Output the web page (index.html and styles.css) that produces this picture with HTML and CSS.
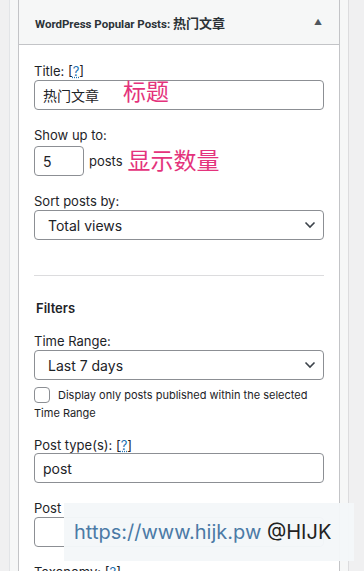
FILE: index.html
```html
<!DOCTYPE html>
<html lang="zh-CN">
<head>
    <meta charset="UTF-8">
    <meta name="viewport" content="width=device-width, initial-scale=1.0">
    <title>WordPress Popular Posts</title>
    <link rel="stylesheet" href="styles.css">
</head>
<body>
    <div class="sidebar">
        <div class="widget">
            <div class="widget-top">
                <span class="widget-title">WordPress Popular Posts: <span class="cjk">热门文章</span></span>
                <span class="toggle">&#9650;</span>
            </div>
            <div class="widget-inside">
                <div class="field">
                    <label class="label">Title: [<a class="help">?</a>]</label>
                    <div class="input">
                        <span>热门文章</span>
                        <span class="note note-title">标题</span>
                    </div>
                </div>

                <div class="field">
                    <label class="label">Show up to:</label>
                    <div class="row">
                        <div class="input input-small">5</div>
                        <span class="unit">posts</span>
                        <span class="note">显示数量</span>
                    </div>
                </div>

                <div class="field">
                    <label class="label">Sort posts by:</label>
                    <div class="select">
                        <span>Total views</span>
                        <svg width="12" height="8" viewBox="0 0 12 8"><path d="M1.5 1.5 L6 6 L10.5 1.5" fill="none" stroke="#3c434a" stroke-width="1.6"/></svg>
                    </div>
                </div>

                <hr class="divider">

                <h4 class="section">Filters</h4>

                <div class="field field-tight">
                    <label class="label">Time Range:</label>
                    <div class="select">
                        <span>Last 7 days</span>
                        <svg width="12" height="8" viewBox="0 0 12 8"><path d="M1.5 1.5 L6 6 L10.5 1.5" fill="none" stroke="#3c434a" stroke-width="1.6"/></svg>
                    </div>
                    <p class="check-line"><span class="checkbox"></span>Display only posts published within the selected Time Range</p>
                </div>

                <div class="field">
                    <label class="label label-near">Post type(s): [<a class="help">?</a>]</label>
                    <div class="input">post</div>
                </div>

                <div class="field">
                    <label class="label">Post</label>
                    <div class="input"></div>
                </div>

                <div class="field">
                    <label class="label">Taxonomy: [<a class="help">?</a>]</label>
                </div>
            </div>
        </div>
        <div class="watermark"><span class="url">https://www.hijk.pw</span> @HIJK</div>
    </div>
</body>
</html>
```

FILE: styles.css
```css
body, html {
    margin: 0;
    height: 100%;
    overflow: hidden;
    background-color: #f0f0f1;
}
body {
    font-family: Inter, "Noto Sans CJK SC", sans-serif;
    font-size: 13px;
    color: #1d2327;
}
.sidebar {
    position: relative;
    margin-left: 9px;
    width: 322px;
    height: 100%;
    padding: 0 8px;
    background-color: #f6f7f7;
    border-left: 1px solid #e2e4e7;
    border-right: 1px solid #dcdcde;
}
.widget {
    background-color: #fff;
    border: 1px solid #c3c4c7;
    border-top: none;
    height: 100%;
}
.widget-top {
    display: flex;
    align-items: center;
    justify-content: space-between;
    height: 44px;
    padding: 0 15px 0 16px;
    background-color: #f6f7f7;
    border-bottom: 1px solid #c3c4c7;
}
.widget-title {
    font-family: Roboto, "Noto Sans CJK SC", sans-serif;
    font-weight: 700;
    font-size: 11.5px;
    color: #2c3338;
}
.widget-title .cjk {
    font-family: "Noto Sans CJK SC", sans-serif;
    font-size: 13px;
    font-weight: 700;
}
.toggle {
    font-size: 8px;
    color: #50575e;
    margin-right: 2px;
}
.widget-inside {
    padding: 17px 15px 0 15px;
}
.field {
    margin-bottom: 16px;
}
.field-tight {
    margin-bottom: 14px;
}
.label {
    display: block;
    line-height: 18px;
}
.label-near {
    margin-bottom: -1px;
}
.help {
    color: #2271b1;
    text-decoration: underline;
    text-decoration-style: dotted;
}
.input {
    display: flex;
    align-items: center;
    box-sizing: border-box;
    height: 30px;
    padding: 0 8px;
    border: 1px solid #8c8f94;
    border-radius: 4px;
    font-size: 14px;
    background: #fff;
}
.input-small {
    width: 50px;
}
.row {
    display: flex;
    align-items: center;
    margin-top: 2px;
}
.unit {
    margin-left: 5px;
    font-size: 13px;
}
.note {
    color: #e4337c;
    font-size: 23px;
    margin-left: 5px;
    line-height: 26px;
}
.note-title {
    margin-left: 24px;
    position: relative;
    top: -3px;
}
.select {
    display: flex;
    align-items: center;
    justify-content: space-between;
    box-sizing: border-box;
    height: 30px;
    padding: 0 7px 0 13px;
    border: 1px solid #8c8f94;
    border-radius: 4px;
    font-size: 14px;
}
.divider {
    border: none;
    border-top: 1px solid #dcdcde;
    margin: 35px 0 23px;
}
.section {
    font-size: 13px;
    font-weight: 600;
    margin: 0 0 15px 2px;
    line-height: 18px;
}
.check-line {
    margin: 6px 0 0;
    font-size: 11px;
    line-height: 18px;
}
.checkbox {
    display: inline-block;
    vertical-align: -4px;
    box-sizing: border-box;
    width: 16px;
    height: 16px;
    border: 1px solid #8c8f94;
    border-radius: 4px;
    margin-right: 8px;
}
.watermark {
    position: absolute;
    left: 54px;
    top: 503px;
    width: 280px;
    height: 58px;
    padding-left: 10px;
    display: flex;
    align-items: center;
    background-color: rgba(244, 247, 249, 0.97);
    font-size: 20px;
    color: #222;
    white-space: pre;
}
.url {
    color: #4b7aa6;
}
```
